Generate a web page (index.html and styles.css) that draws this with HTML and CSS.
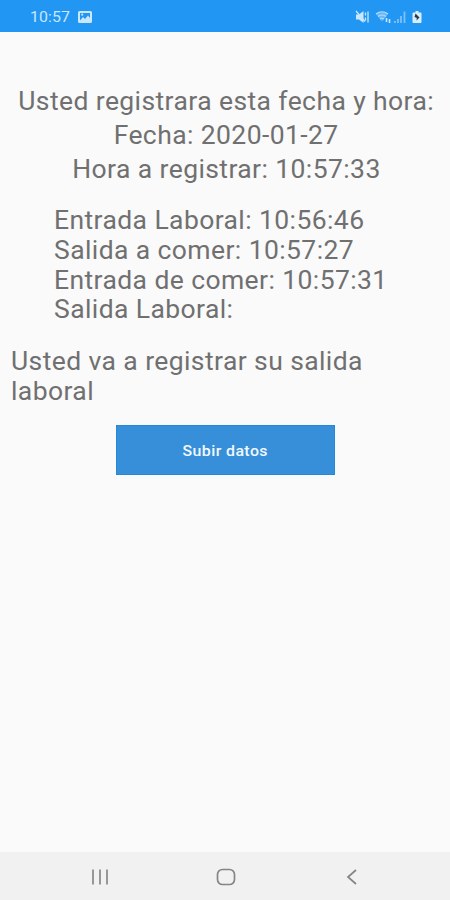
FILE: index.html
```html
<!DOCTYPE html>
<html lang="es">
<head>
<meta charset="utf-8">
<title>Registro</title>
<link rel="stylesheet" href="styles.css">
</head>
<body>
<div class="screen">
  <header class="status">
    <span class="clock"><span class="wide">10:57</span></span>
    <svg class="photo" width="14" height="12" viewBox="0 0 14 12"><path fill-rule="evenodd" d="M1.500 0h11Q14 0 14 1.500v9q0 1.500-1.500 1.500h-11Q0 12 0 10.500v-9Q0 0 1.500 0zM2 2v7.500L5 6l2 2 3-3.500 2 2.500V2z" fill="#c9e7fd"/><circle cx="4.200" cy="3.700" r="1.100" fill="#c9e7fd"/></svg>
    <svg class="signals" width="68" height="16" viewBox="0 0 68 16">
      <path d="M1 5.500h3L8.500 2v12L4 10.500H1z" fill="#c9e7fd"/>
      <path d="M1 2 10 12.500M10.500 3.500v3M10.500 8.500v3M13 2.500v11" fill="none" stroke="#c9e7fd" stroke-width="1.300"/>
      <path d="M21 5q6-4.500 12 0l-6 7.500z" fill="#6bb8f7"/>
      <path d="M21 5q6-4.500 12 0M23 7.500q4-3 8 0M25 10q2-1.500 4 0" fill="none" stroke="#b5ddfb" stroke-width="1.200"/>
      <path d="M31.500 9v4M34.500 10v4" stroke="#c9e7fd" stroke-width="1.600"/>
      <path d="M40 14v-2M43 14v-4M46 14V7M49.500 14V2.500" stroke="#7cc1f8" stroke-width="1.800"/>
      <path d="M60.500 2h3v1.500h2q1 0 1 1V13q0 1-1 1h-7q-1 0-1-1V4.500q0-1 1-1h2z" fill="#d8eefe"/>
      <path d="M60.500 4.500 64.500 8.500 61.500 11.500 61.800 9 59.500 8z" fill="#263a4a"/>
    </svg>
  </header>
  <main class="content">
    <section class="heading">
      <p><span class="wide">Usted registrara esta fecha y hora:</span></p>
      <p><span class="wide">Fecha: 2020-01-27</span></p>
      <p><span class="wide">Hora a registrar: 10:57:33</span></p>
    </section>
    <section class="times">
      <p><span class="wide">Entrada Laboral: 10:56:46</span></p>
      <p><span class="wide">Salida a comer: 10:57:27</span></p>
      <p><span class="wide">Entrada de comer: 10:57:31</span></p>
      <p><span class="wide">Salida Laboral:</span></p>
    </section>
    <p class="notice"><span class="wide">Usted va a registrar su salida<br>laboral</span></p>
    <button class="upload"><span class="wide">Subir datos</span></button>
  </main>
  <nav class="navbar">
    <svg width="18" height="16" viewBox="0 0 18 16"><path d="M2 .5v15M9 .5v15M16 .5v15" stroke="#8e8e8e" stroke-width="1.800"/></svg>
    <svg class="home" width="20" height="18" viewBox="0 0 20 18"><rect x="1.500" y="1.500" width="17" height="15" rx="5" fill="none" stroke="#858585" stroke-width="1.700"/></svg>
    <svg width="12" height="16" viewBox="0 0 12 16"><path d="M10 1 2 8l8 7" fill="none" stroke="#858585" stroke-width="1.700"/></svg>
  </nav>
</div>
</body>
</html>
```
FILE: styles.css
```css
* { box-sizing: border-box; }
body { margin: 0; font-family: Roboto, "Liberation Sans", sans-serif; background: #fafafa; }
p { margin: 0; white-space: nowrap; }
svg { display: block; }
.wide { display: inline-block; letter-spacing: .38px; transform: scaleX(1.06); transform-origin: left; }
.screen { width: 450px; height: 900px; display: flex; flex-direction: column; background: #fafafa; color: #707070; }
.status { height: 32px; flex: none; display: flex; align-items: center; padding: 1px 27px 0 30px; background: #2196f3; }
.clock { width: 48px; color: #c9e7fd; font-size: 15px; line-height: 20px; }
.clock .wide { letter-spacing: .1px; }
.signals { margin-left: auto; }
.content { flex: 1; display: flex; flex-direction: column; font-size: 25px; }
.heading { padding: 52.5px 0 0 2px; text-align: center; line-height: 34px; }
.heading .wide, .upload .wide { transform-origin: center; }
.times { padding: 19.7px 0 0 53.5px; line-height: 29.7px; }
.notice { padding: 22.3px 0 0 11px; line-height: 29.7px; }
.upload { width: 219px; height: 50px; margin: 18.7px 0 0 116px; padding: 2px 0 0; border: 1px solid #2389d8; background: #368fd8; color: #f2f9ff; font: 500 15px Roboto, sans-serif; }
.navbar { height: 48px; flex: none; display: flex; justify-content: space-between; align-items: center; padding: 2px 92px 0 91px; background: #f1f1f1; }
.home { margin-right: 4px; }
```
